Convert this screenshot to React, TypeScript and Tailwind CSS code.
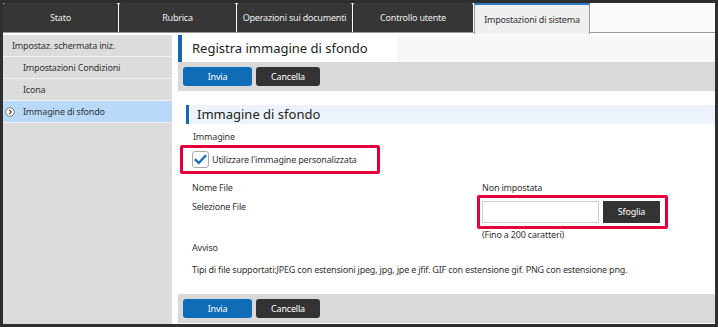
import React from 'react';

const tabs = [
  { label: 'Stato', w: 'w-[115px]' },
  { label: 'Rubrica', w: 'w-[117px]' },
  { label: 'Operazioni sui documenti', w: 'w-[115px]' },
  { label: 'Controllo utente', w: 'w-[120px]' },
];

const menu = [
  { label: 'Impostaz. schermata iniz.', indent: 'pl-[9px]' },
  { label: 'Impostazioni Condizioni', indent: 'pl-[20px]' },
  { label: 'Icona', indent: 'pl-[20px]' },
  { label: 'Immagine di sfondo', indent: 'pl-[20px]', active: true },
];

function ActionBar() {
  return (
    <div className="h-[29px] bg-[#d9d9d9] flex items-center pl-[5px] gap-[4px]">
      <button className="w-[69px] h-[19px] rounded-[3px] bg-[#0f6db8] text-white">Invia</button>
      <button className="w-[64px] h-[19px] rounded-[3px] bg-[#333333] text-white">Cancella</button>
    </div>
  );
}

function Chevron() {
  return (
    <svg width="10" height="10" viewBox="0 0 10 10" className="absolute left-[2px] top-[6px]">
      <circle cx="5" cy="5" r="4.3" fill="#fff" stroke="#777" strokeWidth="1" />
      <path d="M4.2 3 L6.2 5 L4.2 7" fill="none" stroke="#555" strokeWidth="1.3" />
    </svg>
  );
}

export default function App() {
  return (
    <div
      className="w-[718px] h-[327px] border-[3px] border-[#2e2e2e] bg-white flex flex-col overflow-hidden text-[#333] text-[9px] tracking-[-0.2px]"
      style={{ fontFamily: '"Noto Sans", "Open Sans", sans-serif' }}
    >
      <div className="h-[30px] flex gap-[1px] bg-[#fafafa] border-b border-[#999] shrink-0">
        {tabs.map((t) => (
          <div
            key={t.label}
            className={`${t.w} h-full bg-[#363636] rounded-t-[2px] text-[#eee] flex items-center justify-center whitespace-nowrap`}
          >
            {t.label}
          </div>
        ))}
        <div className="w-[116px] h-[31px] bg-[#efefef] border-t-2 border-x border-t-[#2a7bc0] border-x-[#999] flex items-center justify-center whitespace-nowrap">
          Impostazioni di sistema
        </div>
      </div>

      <div className="flex flex-1 pt-[2px] min-h-0">
        <aside className="w-[169px] bg-[#dcdcdc] shrink-0">
          {menu.map((m) => (
            <div
              key={m.label}
              className={`relative h-[22px] border-b border-[#f2f2f2] flex items-center ${m.indent} ${m.active ? 'bg-[#b9d9f9]' : ''}`}
            >
              {m.active && <Chevron />}
              {m.label}
            </div>
          ))}
        </aside>

        <main className="flex-1 ml-[6px] flex flex-col pb-[1px]">
          <div className="h-[27px] flex bg-[#f7f7f7]">
            <div className="w-[4px] bg-[#1565b0]" />
            <div className="w-[215px] bg-white flex items-center pl-[10px] text-[13px] tracking-normal text-[#222]">
              Registra immagine di sfondo
            </div>
          </div>
          <ActionBar />

          <div className="mt-[14px] ml-[8px] h-[19px] bg-[#edf3fb] border-l-[3px] border-[#1565b0] flex items-center pl-[8px] text-[13px] tracking-normal text-[#222]">
            Immagine di sfondo
          </div>

          <div className="mt-[6px] pl-[15px] h-[14px] flex items-center">Immagine</div>

          <div className="mt-[1px] ml-[2px] w-[200px] h-[29px] border-[3px] border-[#e4003b] rounded-[2px] flex items-center pl-[9px] gap-[3px]">
            <div className="w-[17px] h-[17px] rounded-[3px] border border-[#aaa] bg-white flex items-center justify-center">
              <svg width="13" height="11" viewBox="0 0 13 11">
                <path d="M1.5 5.8 L4.8 9 L11.5 1.8" fill="none" stroke="#1a6fc0" strokeWidth="2.4" strokeLinecap="round" strokeLinejoin="round" />
              </svg>
            </div>
            <span className="whitespace-nowrap">Utilizzare l'immagine personalizzata</span>
          </div>

          <div className="mt-[7px] flex">
            <div className="w-[304px] pl-[14px]">
              <div className="h-[14px] flex items-center">Nome File</div>
              <div className="mt-[5px] h-[14px] flex items-center">Selezione File</div>
            </div>
            <div>
              <div className="h-[14px] flex items-center">Non impostata</div>
              <div className="-ml-[5px] w-[191px] h-[34px] border-[3px] border-[#e4003b] rounded-[2px] flex items-center pl-[2px] gap-[4px]">
                <div className="w-[117px] h-[22px] border border-[#ccc] bg-white" />
                <button className="w-[57px] h-[22px] bg-[#333333] text-white">Sfoglia</button>
              </div>
              <div className="h-[12px] flex items-center">(Fino a 200 caratteri)</div>
            </div>
          </div>

          <div className="pl-[14px] h-[14px] flex items-center">Avviso</div>
          <div className="mt-[8px] pl-[14px] h-[14px] flex items-center whitespace-nowrap">
            Tipi di file supportati:JPEG con estensioni jpeg, jpg, jpe e jfif. GIF con estensione gif. PNG con estensione png.
          </div>

          <div className="mt-auto">
            <ActionBar />
          </div>
        </main>
      </div>
    </div>
  );
}
